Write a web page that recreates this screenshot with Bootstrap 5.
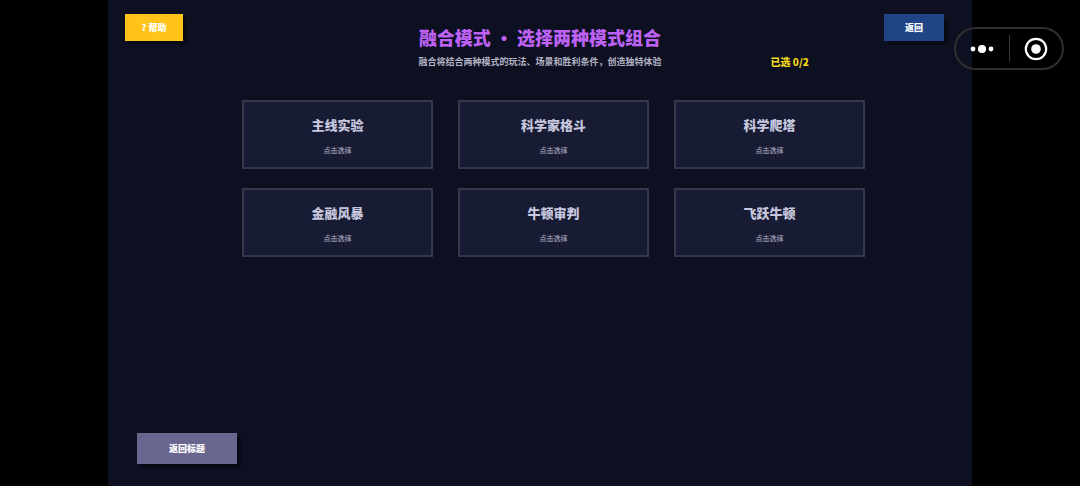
<!DOCTYPE html>
<html lang="zh-CN">
<head>
<meta charset="utf-8">
<meta name="viewport" content="width=device-width, initial-scale=1">
<title>融合模式</title>
<link href="https://cdn.jsdelivr.net/npm/bootstrap@5.3.0/dist/css/bootstrap.min.css" rel="stylesheet">
<style>
  body { background: #000; color: #fff; font-family: "Noto Sans CJK SC", sans-serif; }
  .stage { width: 80%; background: #0d1020; }
  .topbar { padding: 14px 28px 0 17px; }
  .game-btn { border: 0; border-radius: 0; padding: 0; color: #fff; font-size: 9px; font-weight: 900; line-height: 27px; box-shadow: 4px 4px 0 #080a15; }
  .game-btn:hover { color: #fff; filter: brightness(1.1); }
  .btn-help { width: 58px; background: #ffc31a; }
  .btn-help:hover { background: #ffc31a; }
  .btn-return { width: 60px; background: #214487; }
  .btn-return:hover { background: #214487; }
  .btn-title { width: 100px; line-height: 31px; background: #68658f; }
  .btn-title:hover { background: #68658f; }
  .heading { margin-top: -18px; }
  .heading h1 { color: #bd62f5; font-size: 18px; font-weight: 900; line-height: 28px; }
  .subline { display: grid; grid-template-columns: 1fr auto 1fr; line-height: 22px; font-weight: 900; }
  .intro { grid-column: 2; font-size: 9px; font-weight: 700; color: #b4b4c5; }
  .picked { font-size: 10px; color: #f2d71c; padding-left: 109px; }
  .modes { display: grid; grid-template-columns: repeat(3, 1fr); gap: 19px 25px; margin: 27px 107px 0 134px; }
  .mode { border: 2px solid #35384c; border-radius: 0; background: #171b33; color: #c6c6de; padding: 13px 0 10px; }
  .mode:hover { border-color: #68658f; background: #171b33; color: #c6c6de; }
  .mode-name { font-size: 13px; font-weight: 900; line-height: 20px; margin-bottom: 8px; }
  .mode-hint { font-size: 7px; font-weight: 700; line-height: 14px; color: #8b8ca0; }
  .bottom { padding: 0 29px 22px; }
  .capsule { top: 27px; right: 16px; width: 110px; height: 43px; border: 2px solid #2f2f31; border-radius: 22px; }
  .capsule button { flex: 1; height: 100%; border: 0; padding: 0; background: none; }
  .capsule .rule { width: 1px; height: 27px; background: #3a3a3c; }
</style>
</head>
<body>
<main class="stage mx-auto min-vh-100 d-flex flex-column">
  <div class="topbar d-flex justify-content-between">
    <button type="button" class="btn game-btn btn-help">? 帮助</button>
    <button type="button" class="btn game-btn btn-return">返回</button>
  </div>
  <header class="heading text-center">
    <h1 class="mb-0">融合模式 ・ 选择两种模式组合</h1>
    <div class="subline">
      <span class="intro">融合将结合两种模式的玩法、场景和胜利条件，创造独特体验</span>
      <span class="picked text-start">已选 0/2</span>
    </div>
  </header>
  <section class="modes" aria-label="模式">
    <button type="button" class="btn mode"><span class="mode-name d-block">主线实验</span><span class="mode-hint d-block">点击选择</span></button>
    <button type="button" class="btn mode"><span class="mode-name d-block">科学家格斗</span><span class="mode-hint d-block">点击选择</span></button>
    <button type="button" class="btn mode"><span class="mode-name d-block">科学爬塔</span><span class="mode-hint d-block">点击选择</span></button>
    <button type="button" class="btn mode"><span class="mode-name d-block">金融风暴</span><span class="mode-hint d-block">点击选择</span></button>
    <button type="button" class="btn mode"><span class="mode-name d-block">牛顿审判</span><span class="mode-hint d-block">点击选择</span></button>
    <button type="button" class="btn mode"><span class="mode-name d-block">飞跃牛顿</span><span class="mode-hint d-block">点击选择</span></button>
  </section>
  <footer class="bottom mt-auto">
    <button type="button" class="btn game-btn btn-title">返回标题</button>
  </footer>
</main>
<div class="capsule position-fixed d-flex align-items-center">
  <button type="button" aria-label="更多" class="d-flex align-items-center justify-content-center">
    <svg width="24" height="10" viewBox="0 0 24 10" fill="#fff"><circle cx="3" cy="5" r="2.4"/><circle cx="12" cy="5" r="4.1"/><circle cx="21" cy="5" r="2.4"/></svg>
  </button>
  <span class="rule"></span>
  <button type="button" aria-label="关闭" class="d-flex align-items-center justify-content-center">
    <svg width="24" height="24" viewBox="0 0 24 24"><circle cx="12" cy="12" r="10.2" fill="none" stroke="#fff" stroke-width="2.2"/><circle cx="12" cy="12" r="4.8" fill="#fff"/></svg>
  </button>
</div>
<script src="https://cdn.jsdelivr.net/npm/bootstrap@5.3.0/dist/js/bootstrap.bundle.min.js"></script>
</body>
</html>
